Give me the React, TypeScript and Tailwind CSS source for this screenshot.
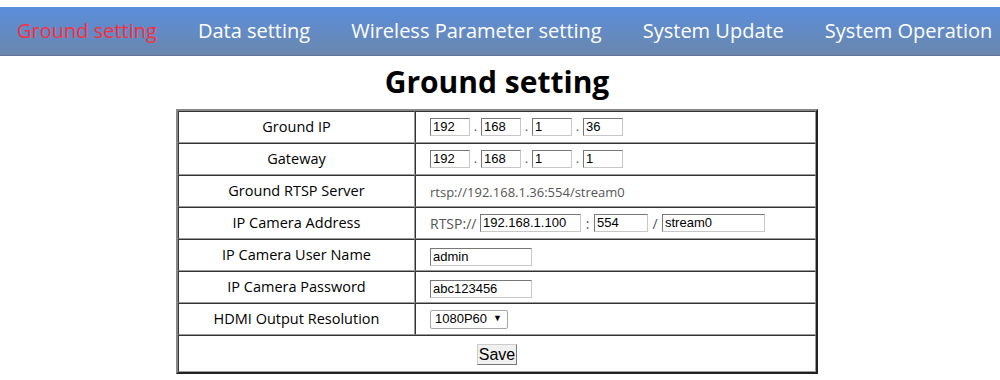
import React, { useState } from "react";

const navItems = [
  "Ground setting",
  "Data setting",
  "Wireless Parameter setting",
  "System Update",
  "System Operation",
];

const ui = { fontFamily: '"Open Sans", "Noto Sans", sans-serif' };
const arial = { fontFamily: '"Liberation Sans", Arial, sans-serif' };

const IpInput = ({ value }: { value: string }) => (
  <input
    defaultValue={value}
    style={arial}
    className="w-[40px] h-[18px] border border-t-[#777] border-l-[#777] border-r-[#c8c8c8] border-b-[#c8c8c8] px-[2px] text-[13px] text-black outline-none"
  />
);

const IpRow = ({ parts }: { parts: string[] }) => (
  <div className="flex items-center">
    {parts.map((p, i) => (
      <React.Fragment key={i}>
        {i > 0 && <span className="w-[11px] text-center text-[13px] text-[#666]">.</span>}
        <IpInput value={p} />
      </React.Fragment>
    ))}
  </div>
);

const TextInput = ({ value, w }: { value: string; w: string }) => (
  <input
    defaultValue={value}
    style={arial}
    className={`${w} h-[18px] border border-t-[#777] border-l-[#777] border-r-[#c8c8c8] border-b-[#c8c8c8] px-[2px] text-[13px] text-black outline-none`}
  />
);

const Row = ({ label, children }: { label: string; children: React.ReactNode }) => (
  <tr className="h-[32px]">
    <td
      style={ui}
      className="w-[237px] text-center text-[14.5px] text-black border border-t-[#333] border-l-[#333] border-b-[#999] border-r-[#999]"
    >
      {label}
    </td>
    <td className="pl-[14px] border border-t-[#333] border-l-[#333] border-b-[#999] border-r-[#999]">
      {children}
    </td>
  </tr>
);

export default function App() {
  const [active, setActive] = useState(0);
  return (
    <div className="w-[1000px] h-[380px] bg-white overflow-hidden pt-[7px]">
      <nav
        style={ui}
        className="h-[49px] flex items-center gap-[41px] pl-[17px] bg-gradient-to-b from-[#5a8ddc] to-[#6a87ad] border-b border-[#5f7496]"
      >
        {navItems.map((item, i) => (
          <span
            key={item}
            onClick={() => setActive(i)}
            className={`text-[20px] cursor-pointer whitespace-nowrap ${
              active === i ? "text-[#ff2d3c]" : "text-white"
            }`}
          >
            {item}
          </span>
        ))}
      </nav>
      <div className="w-[994px]">
        <h1 style={ui} className="text-center text-[30px] font-bold leading-[44px] mt-[4px] text-black">
          Ground setting
        </h1>
        <table className="mx-auto mt-[5px] w-[642px] border-separate border-spacing-0 border-2 border-t-[#888] border-l-[#888] border-r-[#222] border-b-[#222]">
          <tbody>
            <Row label="Ground IP">
              <IpRow parts={["192", "168", "1", "36"]} />
            </Row>
            <Row label="Gateway">
              <IpRow parts={["192", "168", "1", "1"]} />
            </Row>
            <Row label="Ground RTSP Server">
              <span style={ui} className="text-[13px] text-[#555]">
                rtsp://192.168.1.36:554/stream0
              </span>
            </Row>
            <Row label="IP Camera Address">
              <div className="flex items-center text-[14px] text-[#555]" style={ui}>
                <span className="w-[50px]">RTSP://</span>
                <TextInput value="192.168.1.100" w="w-[101px]" />
                <span className="w-[13px] text-center">:</span>
                <TextInput value="554" w="w-[54px]" />
                <span className="w-[14px] text-center">/</span>
                <TextInput value="stream0" w="w-[103px]" />
              </div>
            </Row>
            <Row label="IP Camera User Name">
              <TextInput value="admin" w="w-[102px]" />
            </Row>
            <Row label="IP Camera Password">
              <TextInput value="abc123456" w="w-[102px]" />
            </Row>
            <Row label="HDMI Output Resolution">
              <div
                style={arial}
                className="w-[78px] h-[19px] flex items-center gap-[6px] pl-[4px] border border-[#a6a6a6] rounded-[2px] text-[13px] text-black"
              >
                <span>1080P60</span>
                <span className="text-[9px]">▼</span>
              </div>
            </Row>
            <tr className="h-[37px]">
              <td
                colSpan={2}
                className="text-center border border-t-[#333] border-l-[#333] border-b-[#999] border-r-[#999]"
              >
                <button
                  style={arial}
                  className="w-[40px] h-[21px] bg-[#f0f0f0] border border-t-[#ccc] border-l-[#ccc] border-r-[#777] border-b-[#777] text-[16px] leading-none text-black"
                >
                  Save
                </button>
              </td>
            </tr>
          </tbody>
        </table>
      </div>
    </div>
  );
}
